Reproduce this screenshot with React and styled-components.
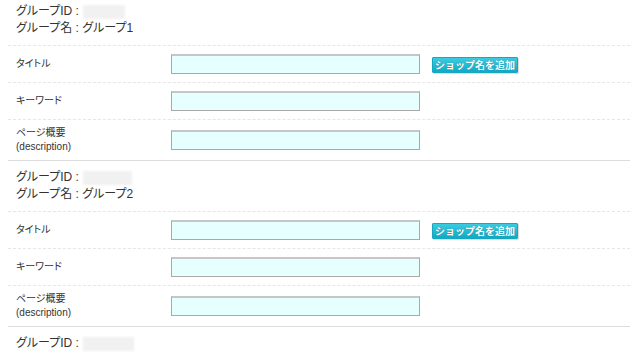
import styled, { createGlobalStyle } from "styled-components";

const GlobalStyle = createGlobalStyle`
  html, body {
    margin: 0;
    padding: 0;
    background: #fff;
  }
  body {
    font-family: "Liberation Sans", "Noto Sans CJK JP", sans-serif;
    color: #333;
    overflow: hidden;
  }
`;

const Page = styled.div`
  width: 622px;
  /* screenshot is taken a few px into the scrolled page */
  margin: -5px 10px 0 8px;
`;

const Group = styled.section`
  border-bottom: 1px solid #dcdcdc;
`;

const GroupHeader = styled.div`
  padding: 8px 8px;
  font-size: 12px;
  line-height: 17px;
  font-feature-settings: "palt";
  color: #333;
`;

const HeaderLine = styled.div`
  display: flex;
  align-items: center;
  white-space: nowrap;
`;

const Hidden = styled.span`
  display: inline-block;
  width: ${(p) => p.w}px;
  height: 14px;
  margin-left: 4px;
  background: #f1f1f1;
  filter: blur(0.8px);
`;

const Row = styled.div`
  display: grid;
  grid-template-columns: 163px 1fr;
  align-items: center;
  border-top: 1px dashed #e6e6e6;
  padding: ${(p) => (p.tall ? "6px 0" : "8px 0")};
`;

const Label = styled.div`
  padding-left: 8px;
  font-size: 10px;
  line-height: 14px;
  font-feature-settings: "palt";
  color: #333;
`;

const Field = styled.div`
  display: flex;
  align-items: center;
  gap: 12px;
`;

const TextInput = styled.input`
  box-sizing: border-box;
  width: 249px;
  height: 20px;
  margin: 0;
  padding: 0 3px;
  background: #e6ffff;
  border-style: solid;
  border-width: 2px 1px 1px 1px;
  border-color: #c6c6c6 #a9a9a9 #a9a9a9 #a9a9a9;
  outline: none;
`;

const AddButton = styled.button`
  height: 16px;
  margin: 2px 0 0;
  padding: 0 2px;
  border: 1px solid #18a7bf;
  border-radius: 1px;
  background: linear-gradient(#3ccbe0, #10aac4);
  box-shadow: 1px 1px 1px rgba(0, 0, 0, 0.15);
  color: #fff;
  font-family: "Noto Sans CJK JP", sans-serif;
  font-size: 10px;
  font-weight: bold;
  line-height: 14px;
  letter-spacing: 0;
  text-shadow: 0 0 1px rgba(0, 0, 0, 0.35);
  white-space: nowrap;
  cursor: pointer;
`;

const groups = [
  { id: 1, name: "グループ1", idWidth: 42 },
  { id: 2, name: "グループ2", idWidth: 49 },
];

function GroupBlock({ group }) {
  return (
    <Group>
      <GroupHeader>
        <HeaderLine>
          グループID :<Hidden w={group.idWidth} />
        </HeaderLine>
        <HeaderLine>グループ名 : {group.name}</HeaderLine>
      </GroupHeader>
      <Row>
        <Label>タイトル</Label>
        <Field>
          <TextInput type="text" />
          <AddButton type="button">ショップ名を追加</AddButton>
        </Field>
      </Row>
      <Row>
        <Label>キーワード</Label>
        <Field>
          <TextInput type="text" />
        </Field>
      </Row>
      <Row tall>
        <Label>
          ページ概要
          <br />
          (description)
        </Label>
        <Field>
          <TextInput type="text" />
        </Field>
      </Row>
    </Group>
  );
}

export default function App() {
  return (
    <>
      <GlobalStyle />
      <Page>
        {groups.map((g) => (
          <GroupBlock key={g.id} group={g} />
        ))}
        <GroupHeader>
          <HeaderLine>
            グループID :<Hidden w={51} />
          </HeaderLine>
        </GroupHeader>
      </Page>
    </>
  );
}
